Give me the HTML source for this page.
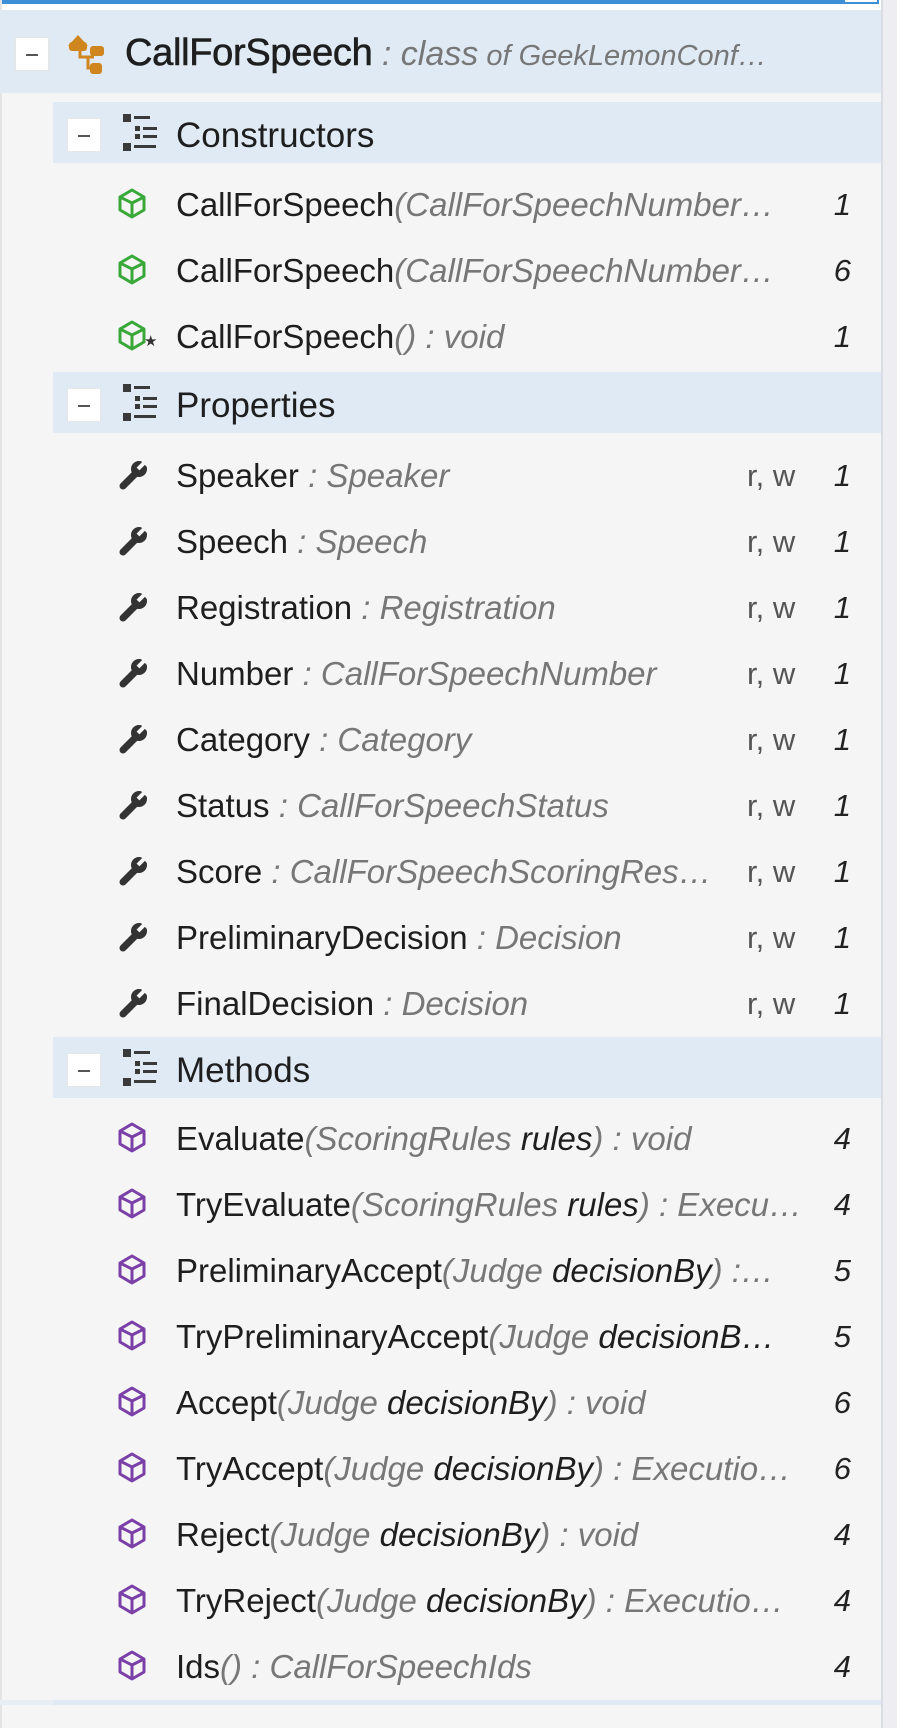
<!DOCTYPE html>
<html><head><meta charset="utf-8"><style>
*{margin:0;padding:0;box-sizing:border-box}
body{width:897px;height:1728px;background:#f5f5f5;font-family:"Liberation Sans",sans-serif;position:relative;overflow:hidden;color:#1e1e1e}
.abs{position:absolute}
.band{position:absolute;left:53px;width:828px;height:61px;background:#dfeaf5}
.minus{position:absolute;width:34px;height:34px;background:#fff;border:1px solid #e6e6e6}
.minus::after{content:"";position:absolute;left:10px;top:16px;width:12px;height:2px;background:#555}
.gt{position:absolute;left:176px;font-size:35px;line-height:61px;margin-top:3px}
.row{position:absolute;left:0;width:881px;height:66px}
.row svg{position:absolute;left:118px;top:18px}
.txt{position:absolute;left:176px;top:2px;line-height:66px;font-size:33px;white-space:nowrap;overflow:hidden;width:625px}
.p .txt{width:560px}
.t{color:#777;font-style:italic}
.d{color:#1e1e1e;font-style:italic}
.rw{position:absolute;left:747px;top:2px;line-height:66px;font-size:31px;color:#555}
.n{position:absolute;right:30px;top:2px;line-height:66px;font-size:31px;font-style:italic;color:#222}
</style></head><body>
<div class="abs" style="left:0;top:0;width:897px;height:10px;background:#fff"></div>
<div class="abs" style="left:0;top:0;width:843px;height:4px;background:#3d8fd8"></div>
<div class="abs" style="left:843px;top:-4px;width:36px;height:8px;border:2px solid #3d8fd8;background:#fff"></div>
<div class="abs" style="left:881px;top:0;width:16px;height:1728px;background:#eeeef2;border-left:2px solid #d9dce2"></div>
<div class="abs" style="left:0;top:0;width:2px;height:1728px;background:#e4e4e4"></div>
<div class="abs" style="left:0;top:10px;width:881px;height:83px;background:#dfeaf5"></div>
<div class="minus" style="left:15px;top:37px"></div>
<svg class="abs" style="left:66px;top:32px" width="46" height="46" viewBox="0 0 46 46"><g fill="#d0861e"><path d="M2 14 L12 3 L22 14Z"/><rect x="3" y="10" width="18" height="9" rx="3"/><rect x="24" y="14" width="14" height="10" rx="3"/><rect x="24" y="31" width="12" height="11" rx="3"/></g><path d="M14 18 V25 H28 M22 25 V36 H28" stroke="#d0861e" stroke-width="3" fill="none"/></svg>
<div class="abs" style="left:125px;top:12px;line-height:83px;font-size:38px;white-space:nowrap;width:730px;overflow:hidden"><span style="letter-spacing:-0.3px;-webkit-text-stroke:0.6px #1e1e1e">CallForSpeech</span><span class="t" style="font-size:34px"> : class</span><span class="t" style="font-size:29px"> of GeekLemonConf…</span></div>
<div class="band" style="top:102px"></div>
<div class="minus" style="left:67px;top:118px"></div>
<svg class="abs" style="left:122px;top:113px" width="40" height="40" viewBox="0 0 40 40" fill="#3a3a3a"><rect x="1" y="1" width="8" height="8"/><rect x="12" y="3" width="16" height="3"/><rect x="13" y="13" width="5" height="5"/><rect x="21" y="14" width="14" height="3"/><rect x="13" y="21" width="5" height="5"/><rect x="21" y="22" width="14" height="3"/><rect x="1" y="30" width="8" height="8"/><rect x="12" y="32" width="22" height="3"/></svg>
<div class="gt" style="top:102px">Constructors</div>
<svg width="0" height="0" style="position:absolute"><defs>
<g id="cube"><path d="M14 2 L26 9 L26 22 L14 29 L2 22 L2 9Z M2 9 L14 15 L26 9 M14 15 V29" fill="none" stroke-width="3" stroke-linejoin="round"/></g>
<g id="wr"><path d="M5 27 L17 15" stroke="#333" stroke-width="7" stroke-linecap="round"/><circle cx="21" cy="10" r="8" fill="#333"/><path d="M22 1 L31 1 L31 10 Z" fill="#f5f5f5"/><path d="M20 10 L29 1" stroke="#f5f5f5" stroke-width="4"/></g>
</defs></svg>
<div class="row" style="top:170px"><svg width="30" height="32"><use href="#cube" stroke="#38a838"/></svg><div class="txt">CallForSpeech<span class="t">(CallForSpeechNumber…</span></div><div class="n">1</div></div>
<div class="row" style="top:236px"><svg width="30" height="32"><use href="#cube" stroke="#38a838"/></svg><div class="txt">CallForSpeech<span class="t">(CallForSpeechNumber…</span></div><div class="n">6</div></div>
<div class="row" style="top:302px"><svg width="30" height="32"><use href="#cube" stroke="#38a838"/></svg><span class="abs" style="left:144px;top:30px;font-size:15px;color:#333">★</span><div class="txt">CallForSpeech<span class="t">() : void</span></div><div class="n">1</div></div>
<div class="band" style="top:372px"></div>
<div class="minus" style="left:67px;top:388px"></div>
<svg class="abs" style="left:122px;top:383px" width="40" height="40" viewBox="0 0 40 40" fill="#3a3a3a"><rect x="1" y="1" width="8" height="8"/><rect x="12" y="3" width="16" height="3"/><rect x="13" y="13" width="5" height="5"/><rect x="21" y="14" width="14" height="3"/><rect x="13" y="21" width="5" height="5"/><rect x="21" y="22" width="14" height="3"/><rect x="1" y="30" width="8" height="8"/><rect x="12" y="32" width="22" height="3"/></svg>
<div class="gt" style="top:372px">Properties</div>
<div class="row p" style="top:441px"><svg width="32" height="32"><use href="#wr"/></svg><div class="txt">Speaker<span class="t"> : Speaker</span></div><div class="rw">r, w</div><div class="n">1</div></div>
<div class="row p" style="top:507px"><svg width="32" height="32"><use href="#wr"/></svg><div class="txt">Speech<span class="t"> : Speech</span></div><div class="rw">r, w</div><div class="n">1</div></div>
<div class="row p" style="top:573px"><svg width="32" height="32"><use href="#wr"/></svg><div class="txt">Registration<span class="t"> : Registration</span></div><div class="rw">r, w</div><div class="n">1</div></div>
<div class="row p" style="top:639px"><svg width="32" height="32"><use href="#wr"/></svg><div class="txt">Number<span class="t"> : CallForSpeechNumber</span></div><div class="rw">r, w</div><div class="n">1</div></div>
<div class="row p" style="top:705px"><svg width="32" height="32"><use href="#wr"/></svg><div class="txt">Category<span class="t"> : Category</span></div><div class="rw">r, w</div><div class="n">1</div></div>
<div class="row p" style="top:771px"><svg width="32" height="32"><use href="#wr"/></svg><div class="txt">Status<span class="t"> : CallForSpeechStatus</span></div><div class="rw">r, w</div><div class="n">1</div></div>
<div class="row p" style="top:837px"><svg width="32" height="32"><use href="#wr"/></svg><div class="txt">Score<span class="t"> : CallForSpeechScoringRes…</span></div><div class="rw">r, w</div><div class="n">1</div></div>
<div class="row p" style="top:903px"><svg width="32" height="32"><use href="#wr"/></svg><div class="txt">PreliminaryDecision<span class="t"> : Decision</span></div><div class="rw">r, w</div><div class="n">1</div></div>
<div class="row p" style="top:969px"><svg width="32" height="32"><use href="#wr"/></svg><div class="txt">FinalDecision<span class="t"> : Decision</span></div><div class="rw">r, w</div><div class="n">1</div></div>
<div class="band" style="top:1037px"></div>
<div class="minus" style="left:67px;top:1053px"></div>
<svg class="abs" style="left:122px;top:1048px" width="40" height="40" viewBox="0 0 40 40" fill="#3a3a3a"><rect x="1" y="1" width="8" height="8"/><rect x="12" y="3" width="16" height="3"/><rect x="13" y="13" width="5" height="5"/><rect x="21" y="14" width="14" height="3"/><rect x="13" y="21" width="5" height="5"/><rect x="21" y="22" width="14" height="3"/><rect x="1" y="30" width="8" height="8"/><rect x="12" y="32" width="22" height="3"/></svg>
<div class="gt" style="top:1037px">Methods</div>
<div class="row" style="top:1104px"><svg width="30" height="32"><use href="#cube" stroke="#7a40a8"/></svg><div class="txt">Evaluate<span class="t">(ScoringRules </span><span class="d">rules</span><span class="t">) : void</span></div><div class="n">4</div></div>
<div class="row" style="top:1170px"><svg width="30" height="32"><use href="#cube" stroke="#7a40a8"/></svg><div class="txt">TryEvaluate<span class="t">(ScoringRules </span><span class="d">rules</span><span class="t">) : Execu…</span></div><div class="n">4</div></div>
<div class="row" style="top:1236px"><svg width="30" height="32"><use href="#cube" stroke="#7a40a8"/></svg><div class="txt">PreliminaryAccept<span class="t">(Judge </span><span class="d">decisionBy</span><span class="t">) :…</span></div><div class="n">5</div></div>
<div class="row" style="top:1302px"><svg width="30" height="32"><use href="#cube" stroke="#7a40a8"/></svg><div class="txt">TryPreliminaryAccept<span class="t">(Judge </span><span class="d">decisionB…</span></div><div class="n">5</div></div>
<div class="row" style="top:1368px"><svg width="30" height="32"><use href="#cube" stroke="#7a40a8"/></svg><div class="txt">Accept<span class="t">(Judge </span><span class="d">decisionBy</span><span class="t">) : void</span></div><div class="n">6</div></div>
<div class="row" style="top:1434px"><svg width="30" height="32"><use href="#cube" stroke="#7a40a8"/></svg><div class="txt">TryAccept<span class="t">(Judge </span><span class="d">decisionBy</span><span class="t">) : Executio…</span></div><div class="n">6</div></div>
<div class="row" style="top:1500px"><svg width="30" height="32"><use href="#cube" stroke="#7a40a8"/></svg><div class="txt">Reject<span class="t">(Judge </span><span class="d">decisionBy</span><span class="t">) : void</span></div><div class="n">4</div></div>
<div class="row" style="top:1566px"><svg width="30" height="32"><use href="#cube" stroke="#7a40a8"/></svg><div class="txt">TryReject<span class="t">(Judge </span><span class="d">decisionBy</span><span class="t">) : Executio…</span></div><div class="n">4</div></div>
<div class="row" style="top:1632px"><svg width="30" height="32"><use href="#cube" stroke="#7a40a8"/></svg><div class="txt">Ids<span class="t">() : CallForSpeechIds</span></div><div class="n">4</div></div>
<div class="abs" style="left:0;top:1700px;width:881px;height:5px;background:#e8eef5"></div>
<div class="abs" style="left:53px;top:1700px;width:828px;height:5px;background:#dfeaf5"></div>
</body></html>
